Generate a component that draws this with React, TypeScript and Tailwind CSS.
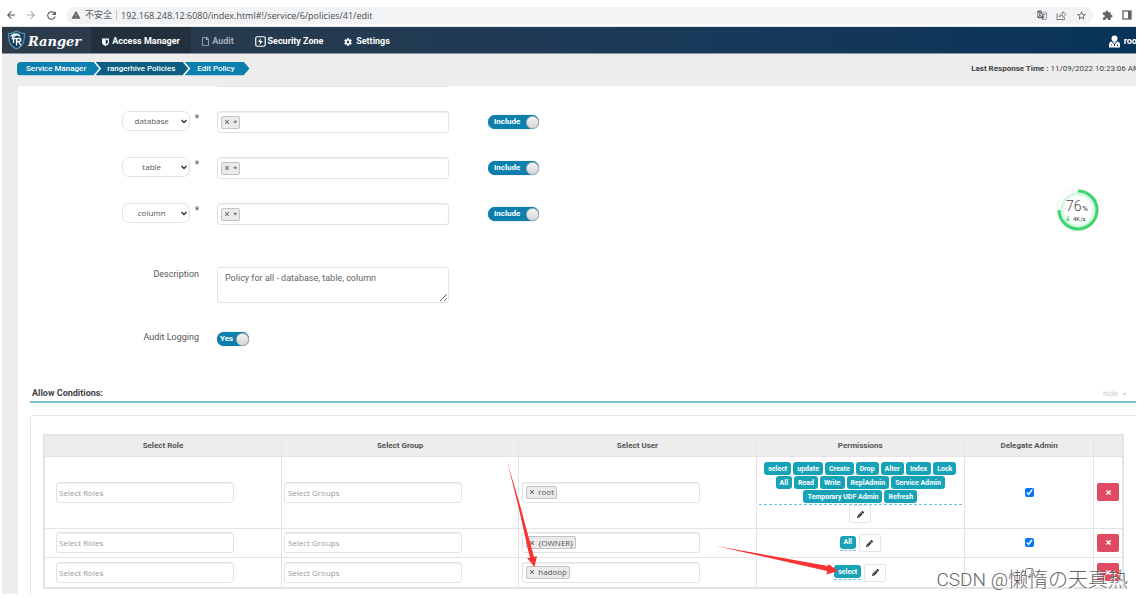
import { useState } from 'react'
import type { ReactNode } from 'react'
import { FaCog, FaPencilAlt, FaRegFile, FaTimes } from 'react-icons/fa'
import { MdArrowBack, MdArrowForward, MdExtension, MdGTranslate, MdRefresh, MdStarBorder, MdWarning } from 'react-icons/md'

const RESOURCES = ['database', 'table', 'column']

const CONDITIONS = [
  {
    user: 'root',
    permissions: ['select', 'update', 'Create', 'Drop', 'Alter', 'Index', 'Lock', 'All', 'Read', 'Write', 'ReplAdmin', 'Service Admin', 'Temporary UDF Admin', 'Refresh'],
    delegate: true,
    rowClass: 'h-[72px]',
  },
  { user: '{OWNER}', permissions: ['All'], delegate: true, rowClass: 'h-[29px]' },
  { user: 'hadoop', permissions: ['select'], delegate: false, rowClass: 'h-[31px]' },
]

const FIELD = 'border border-[#dfe3e8] rounded-[3px] bg-white shadow-[inset_0_1px_1px_rgba(0,0,0,0.07)]'

function BrowserBar() {
  return (
    <div className="flex h-[27px] items-center border-b border-[#e3e4e6] pt-1 pl-[3px] pr-1 text-[#5f6368]">
      <button aria-label="Back" className="mr-2 text-[#4d5156]"><MdArrowBack size={12} /></button>
      <button aria-label="Forward" className="mr-2 text-[#a5a8ab]"><MdArrowForward size={12} /></button>
      <button aria-label="Reload" className="mr-2 text-[#4d5156]"><MdRefresh size={13} /></button>
      <div className="flex h-[17px] flex-1 items-center rounded-full bg-[#f1f3f4] pl-[5px] pr-[6px]">
        <MdWarning size={10} />
        <span className="ml-1 text-[9px] font-['Open_Sans','Noto_Sans_CJK_SC',sans-serif]">不安全</span>
        <span className="mx-1 h-[10px] w-px bg-[#c4c7ca]" />
        <input
          aria-label="Address"
          readOnly
          value="192.168.248.12:6080/index.html#!/service/6/policies/41/edit"
          className="h-4 min-w-0 flex-1 bg-transparent text-[9px] text-[#4a4d51] outline-none font-['Open_Sans',sans-serif]"
        />
        <div className="flex items-center gap-[9px]">
          <button aria-label="Translate"><MdGTranslate size={10} /></button>
          <button aria-label="Share">
            <svg width="11" height="11" viewBox="0 0 22 22" fill="none" stroke="currentColor" strokeWidth="1.6">
              <path d="M4 8H2v11h15v-4M6 14c1-5 4-7 8-7V3l6 6-6 6v-4c-4 0-6 1-8 3z" />
            </svg>
          </button>
          <button aria-label="Bookmark"><MdStarBorder size={11} /></button>
        </div>
      </div>
      <button aria-label="Extensions" className="ml-[9px]"><MdExtension size={11} /></button>
      <button aria-label="Side panel" className="ml-[9px]">
        <svg width="10" height="10" viewBox="0 0 10 10">
          <rect x="1" y="1" width="8" height="8" fill="none" stroke="currentColor" strokeWidth="1.300" />
          <rect x="6" y="1" width="3" height="8" fill="currentColor" />
        </svg>
      </button>
    </div>
  )
}

function RangerLogo() {
  return (
    <svg width="19" height="20" viewBox="0 0 38 40" className="shrink-0">
      <path d="M19 2c5 4 10 5 16 5 0 16-3 25-16 31C6 32 3 23 3 7c6 0 11-1 16-5z" fill="#173a57" stroke="#4a93bd" strokeWidth="2.5" />
      <path d="M6 13c3-6 9-8 15-6 4 1 6 4 7 7l-8-3-6 3-3 3-1-4z" fill="#e9eff3" />
      <path d="M9 17h9M13 17v9M19 16v15M19 17h6c4 0 4 6 0 6h-6M23 23l5 8" fill="none" stroke="#fff" strokeWidth="2.6" />
    </svg>
  )
}

function ShieldIcon() {
  return (
    <svg width="7" height="8" viewBox="0 0 14 16" className="mr-px">
      <path d="M0 1h14v7c0 4-3 6-7 8-4-2-7-4-7-8z" fill="currentColor" />
      <path d="M7.500 3.500H11.500v4.500c0 2-1.500 3.500-4 5z" fill="#22303d" />
    </svg>
  )
}

function UserIcon() {
  return (
    <svg width="11" height="13" viewBox="0 0 22 26">
      <circle cx="11" cy="7" r="6" fill="currentColor" />
      <path d="M0 25v-5c0-4 2-7 6-7h10c4 0 6 3 6 7v5z" fill="currentColor" />
      <path d="M6 13l5 6 5-6M11 18v4M5 19v2M17 19v3" fill="none" stroke="#08345a" strokeWidth="2" />
    </svg>
  )
}

function NavLink({ icon, label, className }: { icon: ReactNode; label: string; className: string }) {
  return (
    <a href="#" className={`flex items-center gap-[2px] whitespace-nowrap pt-[3px] text-[9px] font-bold ${className}`}>
      {icon}
      {label}
    </a>
  )
}

function NavBar() {
  return (
    <header className="flex h-[27px] items-stretch border-b border-[#8796a3] bg-linear-to-r from-[#2d3b48] via-[#17395a] via-65% to-[#073358]">
      <a href="#" className="flex w-[89px] items-center gap-[2px] pl-[5px] text-white">
        <RangerLogo />
        <span className="pt-[3px] text-[13px] font-bold italic font-['DejaVu_Serif',serif]">Ranger</span>
      </a>
      <nav className="flex">
        <NavLink icon={<ShieldIcon />} label="Access Manager" className="w-[100px] justify-center bg-[#22303d] text-white" />
        <NavLink icon={<FaRegFile size={9} />} label="Audit" className="w-[53px] justify-center text-[#a5afb8]" />
        <NavLink
          icon={
            <svg width="11" height="11" viewBox="0 0 22 22">
              <rect x="1.5" y="1.5" width="19" height="19" rx="3" fill="none" stroke="currentColor" strokeWidth="2.4" />
              <path d="M12 4l-6 8h4l-1 6 7-8h-5z" fill="currentColor" />
            </svg>
          }
          label="Security Zone"
          className="w-[90px] justify-center text-white"
        />
        <NavLink icon={<FaCog size={8} className="mr-[2px]" />} label="Settings" className="w-[66px] justify-center text-white" />
      </nav>
      <a href="#" className="-mr-1 ml-auto flex items-center gap-1 pt-[3px] text-[9px] font-bold text-white">
        <UserIcon />
        root
      </a>
    </header>
  )
}

function Breadcrumbs() {
  const crumb = 'flex h-[14px] items-center whitespace-nowrap text-[8px] font-medium text-white'
  const arrow = '[clip-path:polygon(0_0,calc(100%-6px)_0,100%_50%,calc(100%-6px)_100%,0_100%,6px_50%)]'
  return (
    <div className="flex h-[32px] items-center justify-between pb-[3px] pl-[15px]">
      <nav className="flex rounded-l-sm bg-white [clip-path:polygon(0_0,calc(100%-6px)_0,100%_50%,calc(100%-6px)_100%,0_100%)]">
        <a href="#" className={`${crumb} rounded-l-sm bg-[#0b7fad] pl-[9px] pr-[13px] [clip-path:polygon(0_0,calc(100%-6px)_0,100%_50%,calc(100%-6px)_100%,0_100%)]`}>Service Manager</a>
        <a href="#" className={`${crumb} ${arrow} -ml-1 bg-[#0a5f82] pl-[12px] pr-[13px]`}>rangerhive Policies</a>
        <a href="#" className={`${crumb} ${arrow} -ml-1 bg-[#0b7fad] pl-[13px] pr-[15px]`}>Edit Policy</a>
      </nav>
      <p className="-mr-1 whitespace-nowrap text-[8px] text-[#444]">
        <b className="font-bold">Last Response Time :</b> 11/09/2022 10:23:06 AM
      </p>
    </div>
  )
}

function Toggle({ label, name, className }: { label: string; name: string; className: string }) {
  const [on, setOn] = useState(true)
  return (
    <button
      role="switch"
      aria-checked={on}
      aria-label={name}
      onClick={() => setOn(!on)}
      className={`flex h-[14px] items-center justify-between rounded-full bg-[#0b7fad] text-[8px] font-bold text-white shadow-[0_0_1px_#777] ${className}`}
    >
      {label}
      <span className="size-[13px] rounded-full border border-[#bbb] bg-linear-to-b from-[#f4f4f4] to-[#d5d5d5]" />
    </button>
  )
}

function TagField({ tag, name, className }: { tag: string; name: string; className: string }) {
  return (
    <div className={`flex items-center pl-[3px] text-[8px] text-[#555] font-['Open_Sans',sans-serif] ${FIELD} ${className}`}>
      <span className="flex h-[13px] shrink-0 items-center gap-[3px] rounded-xs border border-[#c3c3c3] bg-[#ebebeb] px-[2px]">
        <button aria-label={`Remove ${tag}`} className="text-[#777]"><FaTimes size={6} /></button>
        {tag}
      </span>
      <input aria-label={name} className="h-3 min-w-0 flex-1 outline-none" />
    </div>
  )
}

function ResourceRow({ name }: { name: string }) {
  return (
    <div className="grid h-[46px] grid-cols-[199fr_232fr_687fr] items-start">
      <div className="flex items-start justify-end pr-[18px]">
        <div className="relative flex">
          <select
            aria-label="Resource"
            defaultValue={name}
            className="h-[20px] w-[68px] appearance-none rounded-[7px] border border-[#dfe3e6] bg-white pr-2 text-center text-[8px] text-[#555] [text-align-last:center] font-['Open_Sans',sans-serif]"
          >
            {RESOURCES.map((r) => (
              <option key={r}>{r}</option>
            ))}
          </select>
          <svg className="pointer-events-none absolute right-[3px] top-[8px]" width="6" height="5" viewBox="0 0 6 5">
            <path d="M0.5 1l2.500 2.500L5.500 1" fill="none" stroke="#333" strokeWidth="1.400" />
          </svg>
        </div>
        <span className="ml-[5px] text-[10px] leading-4 text-[#555]">*</span>
      </div>
      <TagField tag="*" name={name} className="h-[22px]" />
      <Toggle label="Include" name={`Include ${name}`} className="ml-[39px] mt-[4px] w-[51px] pl-[6px]" />
    </div>
  )
}

function PolicyForm() {
  return (
    <div className="h-[297px]">
      <div className="grid h-[25px] grid-cols-[199fr_232fr_687fr]">
        <div className="col-start-2 h-px bg-[#dfe3e8]" />
      </div>
      {RESOURCES.map((r) => (
        <ResourceRow key={r} name={r} />
      ))}
      <div className="mt-[18px] grid grid-cols-[199fr_232fr_687fr] items-start text-[9px] text-[#555]">
        <label htmlFor="description" className="pr-[18px] pt-px text-right">Description</label>
        <textarea
          id="description"
          defaultValue="Policy for all - database, table, column"
          className="h-[36px] resize-y rounded-[3px] border border-[#dfe3e8] px-[7px] py-[4px] text-[9px] text-[#666]"
        />
      </div>
      <div className="mt-[28px] grid grid-cols-[199fr_919fr] items-start text-[9px] text-[#555]">
        <span className="pr-[18px] text-right">Audit Logging</span>
        <Toggle label="Yes" name="Audit Logging" className="mt-px w-8 pl-[3px]" />
      </div>
    </div>
  )
}

function ConditionsTable() {
  const cell = 'border border-[#e4e4e4]'
  return (
    <table className="w-full table-fixed border-collapse border-2 border-[#e4e4e4] text-[8px]">
      <colgroup>
        <col className="w-[22%]" />
        <col className="w-[22%]" />
        <col className="w-[22%]" />
        <col className="w-[19.3%]" />
        <col className="w-[12%]" />
        <col className="w-[2.7%]" />
      </colgroup>
      <thead>
        <tr className="h-[21px] bg-[#ededed] text-[#555]">
          {['Select Role', 'Select Group', 'Select User', 'Permissions', 'Delegate Admin', ''].map((h) => (
            <th key={h} className={`${cell} font-bold`}>{h}</th>
          ))}
        </tr>
      </thead>
      <tbody>
        {CONDITIONS.map((c) => (
          <tr key={c.user} className={c.rowClass}>
            <td className={`${cell} h-[inherit] pl-[2px]`}>
              <div className="flex h-full items-center gap-1">
                <span className="my-[3px] w-[5px] self-stretch bg-[radial-gradient(#bbb_40%,transparent_45%)] bg-size-[2px_2px]" />
                <input aria-label="Roles" placeholder="Select Roles" className={`h-[21px] w-[76%] px-[2px] text-[8px] font-['Open_Sans',sans-serif] placeholder:text-[#999] ${FIELD}`} />
              </div>
            </td>
            <td className={`${cell} pl-[2px]`}>
              <input aria-label="Groups" placeholder="Select Groups" className={`block h-[21px] w-[76%] px-[3px] text-[8px] font-['Open_Sans',sans-serif] placeholder:text-[#999] ${FIELD}`} />
            </td>
            <td className={`${cell} pl-[3px]`}>
              <TagField tag={c.user} name="Users" className="h-[21px] w-[76%]" />
            </td>
            <td className={cell}>
              <div className="flex flex-wrap items-center justify-center gap-x-[3px] px-[2px] pt-px">
                <div className="flex flex-wrap justify-center gap-x-[2px] gap-y-px border-b border-dashed border-[#6cc1e8] pb-px">
                  {c.permissions.map((p) => (
                    <span key={p} className="flex h-[13px] items-center rounded-[3px] bg-[#17a2b8] px-[4px] pt-px text-[7px] font-bold text-white">{p}</span>
                  ))}
                </div>
                <button aria-label="Edit permissions" className="flex h-[18px] w-[22px] items-center justify-center rounded-xs border border-[#e2e5e8] bg-white text-[#222]">
                  <FaPencilAlt size={7} />
                </button>
              </div>
            </td>
            <td className={`${cell} text-center`}>
              <input type="checkbox" aria-label="Delegate admin" defaultChecked={c.delegate} className="mx-auto block size-[9px]" />
            </td>
            <td className={cell}>
              <button aria-label="Delete condition" className="mx-auto flex h-[18px] w-[22px] items-center justify-center rounded-xs bg-[#df4b60] text-white">
                <FaTimes size={7} />
              </button>
            </td>
          </tr>
        ))}
      </tbody>
    </table>
  )
}

function SpeedMeter() {
  return (
    <svg className="absolute right-[42px] top-[187px]" width="46" height="46" viewBox="0 0 46 46">
      <defs>
        <radialGradient id="meter">
          <stop offset="70%" stopColor="#fff" />
          <stop offset="100%" stopColor="#a6efc0" />
        </radialGradient>
      </defs>
      <circle cx="23" cy="23" r="22" fill="#f8f8f8" />
      <circle cx="23" cy="23" r="19" fill="url(#meter)" stroke="#fff" strokeWidth="3" />
      <path d="M23 4A19 19 0 1 1 4 23" fill="none" stroke="#3bd46e" strokeWidth="3" />
      <text x="11" y="24" fontSize="14" fontWeight="300" fill="#444" fontFamily="Roboto, sans-serif">76</text>
      <text x="27" y="24" fontSize="8" fill="#444" fontFamily="Roboto, sans-serif">%</text>
      <path d="M13 29v5M11.500 32l1.500 2 1.500-2" fill="none" stroke="#3bd46e" />
      <text x="18" y="34" fontSize="6" fill="#333" fontFamily="Roboto, sans-serif">4K/s</text>
    </svg>
  )
}

function Annotations() {
  return (
    <>
      <svg className="absolute left-[500px] top-[455px]" width="50" height="120" viewBox="0 0 50 120">
        <path d="M7 6L20 50L34 102L37 101L34.500 112L27 103L30 103L18 50z" fill="#fb3232" />
      </svg>
      <svg className="absolute left-[710px] top-[540px]" width="135" height="40" viewBox="0 0 135 40">
        <path d="M6 6L118 26L118.500 24L128 31L116.500 34.500L117 31L6 6z" fill="#fb3232" />
      </svg>
      <p className="absolute bottom-[7px] right-[15px] flex items-center whitespace-pre text-[19px] font-light leading-6 text-[#666] [text-shadow:1px_1px_0_#fff] font-[Roboto,'Noto_Sans_CJK_SC',sans-serif]">
        CSDN @
        <span className="text-[20px]">懒惰の天真热</span>
      </p>
    </>
  )
}

export default function App() {
  return (
    <div className="relative overflow-hidden bg-white pb-[5px] pl-[2px] pr-[7px] font-[Roboto,sans-serif]">
      <div className="overflow-hidden">
        <BrowserBar />
        <NavBar />
        <div className="bg-[#ededed] pl-4">
          <div className="-ml-4">
            <Breadcrumbs />
          </div>
          <main className="bg-white">
            <PolicyForm />
            <section className="pl-3">
              <div className="flex h-[20px] items-center justify-between border-b-2 border-[#7fc0da] pl-[2px] pr-[9px] pt-1">
                <h2 className="text-[9px] font-bold text-[#444]">Allow Conditions:</h2>
                <button className="flex items-center gap-1 text-[8px] text-[#ccc]">
                  hide <span className="text-[5px]">▲</span>
                </button>
              </div>
              <div className="mt-3 rounded-tl-sm border-l border-t border-[#e6e6e6] pb-[5px] pl-3 pr-3 pt-[18px]">
                <ConditionsTable />
              </div>
            </section>
          </main>
        </div>
      </div>
      <SpeedMeter />
      <Annotations />
    </div>
  )
}
